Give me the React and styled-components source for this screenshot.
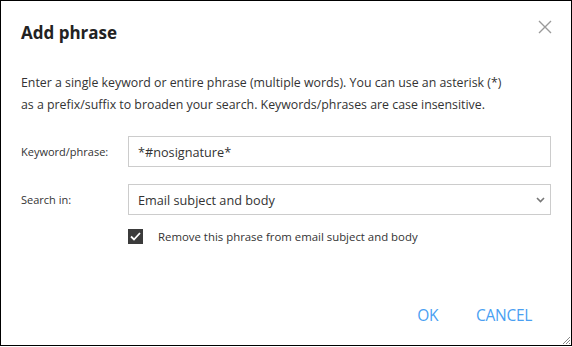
import React from "react"
import styled, { createGlobalStyle } from "styled-components"

const GlobalStyle = createGlobalStyle`
  html, body {
    margin: 0;
    padding: 0;
    background: #fff;
  }
  body {
    font-family: "Open Sans", "Noto Sans", sans-serif;
    color: #333;
  }
`

//  Styled Components
const Dialog = styled.div`
  position: relative;
  box-sizing: border-box;
  width: 572px;
  height: 346px;
  border: 1px solid #000;
  background: #fff;
  padding: 0 20px 0 20px;
  display: flex;
  flex-direction: column;
`

const Header = styled.div`
  display: flex;
  align-items: flex-start;
  justify-content: space-between;
  padding-top: 20px;
  height: 50px;
  box-sizing: border-box;
`

const Title = styled.h1`
  margin: 0;
  font-size: 17px;
  line-height: 24px;
  font-weight: 700;
  color: #222;
`

const Close = styled.button`
  border: none;
  background: none;
  padding: 0;
  margin: -2px -3px 0 0;
  width: 18px;
  height: 18px;
  cursor: pointer;
  color: #9a9a9a;
`

const Intro = styled.p`
  margin: 21px 0 0 0;
  font-size: 12.35px;
  line-height: 22px;
  color: #333;
`

const Line = styled.span`
  display: block;
  white-space: nowrap;
`

const Form = styled.div`
  margin-top: 20px;
  display: grid;
  grid-template-columns: 107px 1fr;
  row-gap: 17px;
  align-items: center;
`

const Label = styled.label`
  font-size: 11px;
  color: #333;
`

const Field = styled.div`
  position: relative;
  box-sizing: border-box;
  height: ${p => p.$h}px;
  border: 1px solid #ccc;
  display: flex;
  align-items: center;
  padding: 0 9px;
  font-size: 12.7px;
  color: #333;
`

const Chevron = styled.svg`
  position: absolute;
  right: 5px;
  top: 50%;
  margin-top: -3px;
`

const CheckRow = styled.div`
  grid-column: 1 / -1;
  display: flex;
  align-items: center;
  gap: 15px;
  padding-left: 107px;
  margin-top: -3px;
  font-size: 11.4px;
  color: #333;
`

const Box = styled.span`
  width: 15px;
  height: 15px;
  background: #3b3b3b;
  display: flex;
  align-items: center;
  justify-content: center;
`

const Footer = styled.div`
  margin-top: auto;
  display: flex;
  justify-content: flex-end;
  gap: 38px;
  padding: 0 19px 19px 0;
`

const Action = styled.button`
  border: none;
  background: none;
  padding: 0;
  font-family: inherit;
  font-size: 15.5px;
  letter-spacing: -0.3px;
  color: #4a9ff2;
  cursor: pointer;
`

const Grip = styled.svg`
  position: absolute;
  right: 0;
  bottom: 0;
`

const App = () => {
  return (
    <>
      <GlobalStyle />
      <Dialog>
        <Header>
          <Title>Add phrase</Title>
          <Close aria-label="Close">
            <svg width="16" height="16" viewBox="0 0 16 16">
              <path d="M2 2 L14 14 M14 2 L2 14" stroke="currentColor" strokeWidth="1.4" fill="none" />
            </svg>
          </Close>
        </Header>

        <Intro>
          <Line>Enter a single keyword or entire phrase (multiple words). You can use an asterisk (*)</Line>
          <Line>as a prefix/suffix to broaden your search. Keywords/phrases are case insensitive.</Line>
        </Intro>

        <Form>
          <Label>Keyword/phrase:</Label>
          <Field $h={31}>*#nosignature*</Field>

          <Label>Search in:</Label>
          <Field $h={31}>
            Email subject and body
            <Chevron width="9" height="6" viewBox="0 0 9 6">
              <path d="M1 1 L4.5 4.5 L8 1" stroke="#777" strokeWidth="1.6" fill="none" />
            </Chevron>
          </Field>

          <CheckRow>
            <Box>
              <svg width="11" height="9" viewBox="0 0 11 9">
                <path d="M1 4.5 L4 7.5 L10 1" stroke="#fff" strokeWidth="1.8" fill="none" />
              </svg>
            </Box>
            Remove this phrase from email subject and body
          </CheckRow>
        </Form>

        <Footer>
          <Action>OK</Action>
          <Action>CANCEL</Action>
        </Footer>

        <Grip width="10" height="10" viewBox="0 0 10 10">
          <path d="M9 2 L2 9 M9 5 L5 9 M9 8 L8 9" stroke="#888" strokeWidth="1" />
        </Grip>
      </Dialog>
    </>
  )
}

export default App
